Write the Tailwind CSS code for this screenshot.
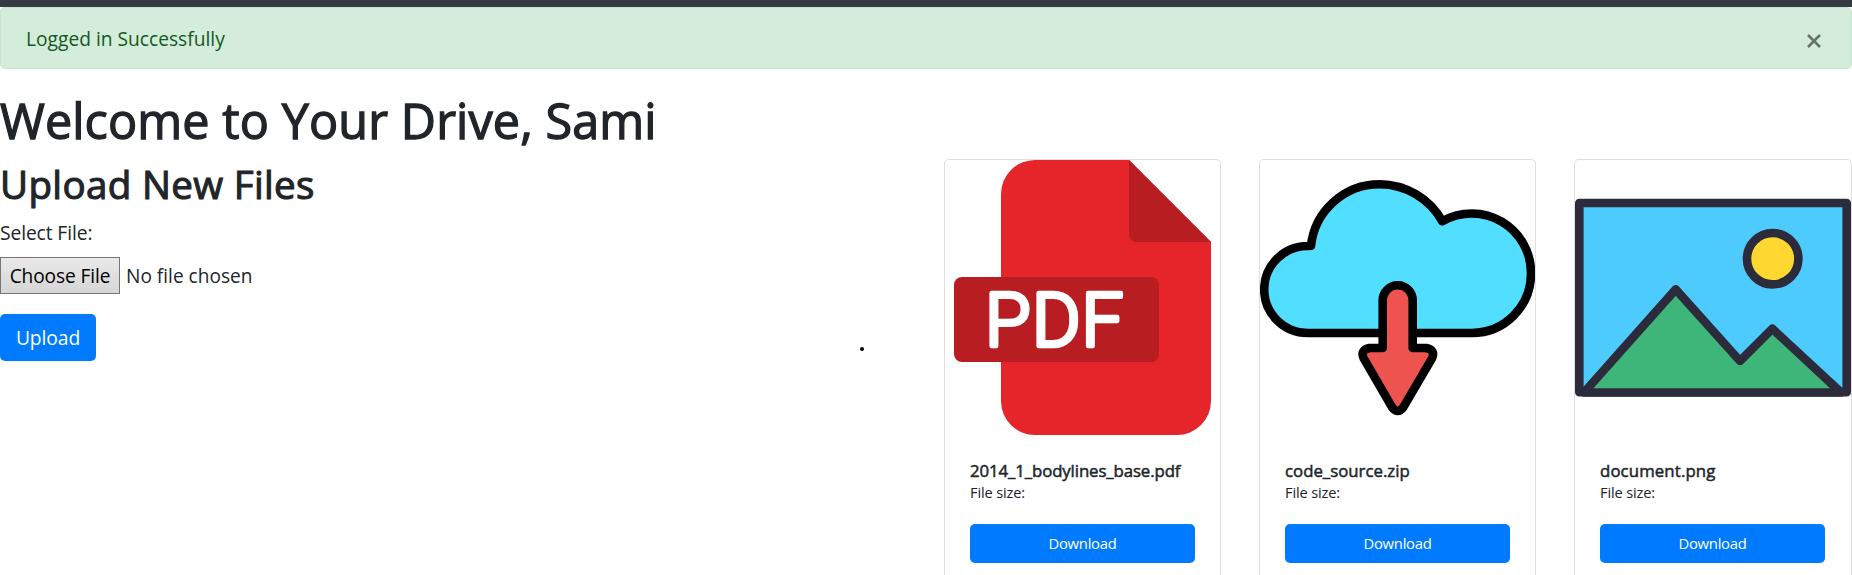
<!DOCTYPE html>
<html lang="en"><head><meta charset="utf-8"><title>Drive</title>
<script src="https://cdn.jsdelivr.net/npm/@tailwindcss/browser@4"></script></head>
<body class="h-[575px] overflow-hidden bg-white font-['Open_Sans','Noto_Sans',sans-serif] text-[#212529]">
<header class="h-[7px] bg-[#343a40]"></header>
<div class="flex h-[62px] items-center justify-between rounded-[5px] border border-[#c3e6cb] bg-[#d4edda] pr-[30px] pl-[25px] text-[#155724]">
<span class="pt-0.5 text-[19.2px] leading-[30px]">Logged in Successfully</span>
<button aria-label="Close"><svg class="mt-[6px] size-[14px]" viewBox="0 0 14 14" fill="none" stroke="#667369" stroke-width="2.6"><path d="M1 1l12 12M13 1L1 13"/></svg></button>
</div>
<h1 class="mt-[21px] h-[60px] text-[48.5px] leading-[60px] tracking-[0.12px] [-webkit-text-stroke:1.3px_#212529]">Welcome to Your Drive, Sami</h1>
<main class="mt-[9px] flex">
<section class="w-[860px]">
<h2 class="mt-px h-12 text-[38.5px] leading-[48px] tracking-[0.35px] [-webkit-text-stroke:1.1px_#212529]">Upload New Files</h2>
<label class="mt-[10px] block text-[19.3px] leading-[30px] tracking-[-0.12px]">Select File:</label>
<div class="mt-[9px] flex h-[37px] items-center gap-[6px] text-[19.1px] whitespace-nowrap"><button class="h-[37px] w-[120px] border border-[#767676] bg-linear-to-b from-[#e9e9e9] to-[#d6d6d6] pt-0.5 tracking-[-0.1px] text-black">Choose File</button><span class="pt-0.5">No file chosen</span></div>
<button class="mt-5 h-[47px] w-24 rounded-[5px] bg-[#007bff] pt-0.5 text-[19.3px] tracking-[-0.1px] text-white">Upload</button>
</section>
<div class="mt-[188px] size-1 rounded-full bg-black"></div>
<section class="ml-20 grid grow grid-cols-[277px_277px_278px] gap-x-[38px]">
<article class="h-[416px] rounded-t-[5px] border border-b-0 border-[#dfdfdf]">
<svg class="block size-[275px]" viewBox="0 0 275 275"><path d="M90 0H184L266 82V241a34 34 0 0 1-34 34H90a34 34 0 0 1-34-34V34A34 34 0 0 1 90 0Z" fill="#e5252a"/><path d="M184 0V74a8 8 0 0 0 8 8H266Z" fill="#b71d21"/><rect x="9" y="117" width="205" height="85" rx="8" fill="#b71d21"/><text x="40 87 136.500" y="186" font-family="Roboto" font-weight="300" font-size="74" fill="#fff" stroke="#fff" stroke-width="4.500" stroke-linejoin="round">PDF</text></svg>
<div class="px-[25px] pt-[25px]"><h5 class="text-[16.8px] leading-[22px] tracking-[-0.1px] [-webkit-text-stroke:0.5px_#212529]">2014_1_bodylines_base.pdf</h5><p class="text-[14.6px] leading-[20px] tracking-[-0.15px]">File size:</p><button class="mt-[22px] h-[39px] w-full rounded-[5px] bg-[#007bff] text-[14.8px] tracking-[-0.25px] text-white">Download</button></div>
</article>
<article class="h-[416px] rounded-t-[5px] border border-b-0 border-[#dfdfdf]">
<svg class="block size-[275px]" viewBox="0 0 275 275" stroke="#000" stroke-width="8.6" stroke-linejoin="round"><path d="M47.7 173a43.500 43.500 0 0 1 0-87L51 85.700A69 69 0 0 1 119.700 24.300A72 72 0 0 1 182.300 61.300A59.300 59.300 0 0 1 271 113.700A59.300 59.300 0 0 1 211.700 173Z" fill="#52deff"/><path d="M122.700 188V140.300a15 15 0 0 1 30 0V188H166q10 2 6 10.300L143.700 246.700q-6 8.600-12 0L103.700 198.300q-4-8.300 6-10.300Z" fill="#ef5350"/></svg>
<div class="px-[25px] pt-[25px]"><h5 class="text-[16.8px] leading-[22px] [-webkit-text-stroke:0.5px_#212529]">code_source.zip</h5><p class="text-[14.6px] leading-[20px] tracking-[-0.15px]">File size:</p><button class="mt-[22px] h-[39px] w-full rounded-[5px] bg-[#007bff] text-[14.8px] tracking-[-0.25px] text-white">Download</button></div>
</article>
<article class="h-[416px] rounded-t-[5px] border border-b-0 border-[#dfdfdf]">
<svg class="block h-[275px] w-[276px]" viewBox="0 0 276 275" stroke="#2c2b3b" stroke-width="8.6" stroke-linejoin="round"><rect x="4.300" y="43" width="267.400" height="189.300" fill="#4ecbfd"/><path d="M9 232.500L100.700 129.300L165 201L197.300 168.700L266 232.500Z" fill="#3fb679"/><circle cx="197.700" cy="98.700" r="25.700" fill="#ffd731"/></svg>
<div class="px-[25px] pt-[25px]"><h5 class="text-[16.8px] leading-[22px] tracking-[0.12px] [-webkit-text-stroke:0.5px_#212529]">document.png</h5><p class="text-[14.6px] leading-[20px] tracking-[-0.15px]">File size:</p><button class="mt-[22px] h-[39px] w-[225px] rounded-[5px] bg-[#007bff] text-[14.8px] tracking-[-0.25px] text-white">Download</button></div>
</article>
</section>
</main>
</body></html>
